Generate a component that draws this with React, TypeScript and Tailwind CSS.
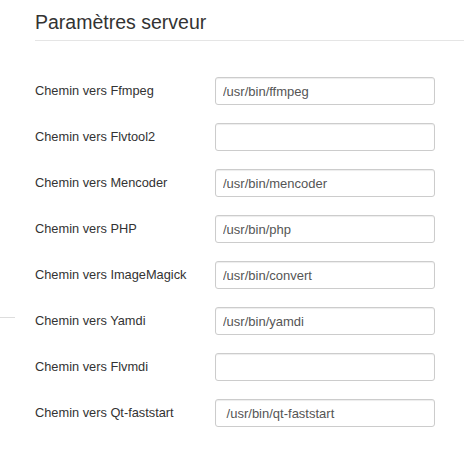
import React from "react";

const rows: { label: string; value: string }[] = [
  { label: "Chemin vers Ffmpeg", value: "/usr/bin/ffmpeg" },
  { label: "Chemin vers Flvtool2", value: "" },
  { label: "Chemin vers Mencoder", value: "/usr/bin/mencoder" },
  { label: "Chemin vers PHP", value: "/usr/bin/php" },
  { label: "Chemin vers ImageMagick", value: "/usr/bin/convert" },
  { label: "Chemin vers Yamdi", value: "/usr/bin/yamdi" },
  { label: "Chemin vers Flvmdi", value: "" },
  { label: "Chemin vers Qt-faststart", value: " /usr/bin/qt-faststart" },
];

export default function App() {
  return (
    <div className="h-[451px] w-[464px] overflow-hidden bg-white font-['Liberation_Sans',Arial,sans-serif] text-[#333]">
      <div className="pl-[35px] pt-[11px]">
        <h2 className="text-[19.5px] leading-[23px]">Paramètres serveur</h2>
        <div className="mt-[6px] border-b border-[#e5e5e5]" />
      </div>

      <div className="flex flex-col gap-[18px] pl-[35px] pt-[36px]">
        {rows.map((r, i) => (
          <div key={r.label} className="relative flex h-[28px] items-center">
            {i === 5 && <div className="absolute left-[-35px] top-[10px] h-px w-[15px] bg-[#dddddd]" />}
            <label className="w-[180px] text-[12.8px] text-[#333]">{r.label}</label>
            <input
              readOnly
              value={r.value}
              className="h-[28px] w-[220px] whitespace-pre rounded-[3px] border border-[#cccccc] bg-white px-[7px] text-[13px] text-[#555] shadow-[inset_0_1px_1px_rgba(0,0,0,0.075)] outline-none"
            />
          </div>
        ))}
      </div>
    </div>
  );
}
